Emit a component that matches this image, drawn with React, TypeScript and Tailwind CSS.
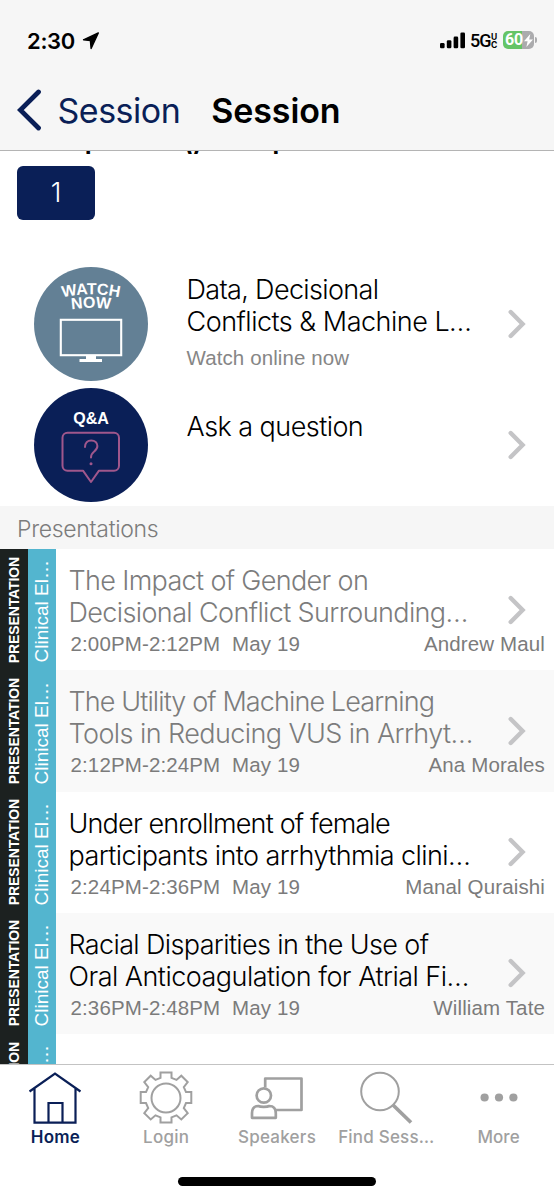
import type { ReactNode } from "react";

type Line = { text: string; cls: string };
type Talk = { lines: Line[]; time: string; speaker: string; past: boolean };

const talks: Talk[] = [
  {
    lines: [
      { text: "The Impact of Gender on", cls: "tracking-[-0.650px]" },
      { text: "Decisional Conflict Surrounding…", cls: "tracking-[-0.620px]" },
    ],
    time: "2:00PM-2:12PM  May 19",
    speaker: "Andrew Maul",
    past: true,
  },
  {
    lines: [
      { text: "The Utility of Machine Learning", cls: "tracking-[-0.890px]" },
      { text: "Tools in Reducing VUS in Arrhyt…", cls: "tracking-[-0.580px]" },
    ],
    time: "2:12PM-2:24PM  May 19",
    speaker: "Ana Morales",
    past: true,
  },
  {
    lines: [
      { text: "Under enrollment of female", cls: "tracking-[-0.820px]" },
      { text: "participants into arrhythmia clini…", cls: "tracking-[-0.580px]" },
    ],
    time: "2:24PM-2:36PM  May 19",
    speaker: "Manal Quraishi",
    past: false,
  },
  {
    lines: [
      { text: "Racial Disparities in the Use of", cls: "tracking-[-0.630px]" },
      { text: "Oral Anticoagulation for Atrial Fi…", cls: "tracking-[-0.520px]" },
    ],
    time: "2:36PM-2:48PM  May 19",
    speaker: "William Tate",
    past: false,
  },
];

function Chevron() {
  return (
    <svg width="18" height="30" viewBox="0 0 18 30" fill="none" className="shrink-0">
      <path d="M2.7 3 L14.6 15 L2.7 27" stroke="#c4c4c6" strokeWidth="4.4" strokeLinecap="round" strokeLinejoin="miter" />
    </svg>
  );
}

function StatusBar() {
  return (
    <div className="flex h-[70px] items-start pl-[27px] pr-[17px] pt-[27px]">
      <span className="text-[22px] font-semibold leading-7 tracking-[-0.300px]">2:30</span>
      <svg width="18" height="18" viewBox="0 0 18 18" className="ml-[7px] mt-[5px]">
        <path
          d="M16.300 1 1.500 7.800l6.900.8.700 7.900z"
          stroke="black"
          strokeWidth="1.400"
          strokeLinejoin="round"
        />
      </svg>
      <svg width="26" height="17" viewBox="0 0 26 17" className="ml-auto mt-[5px]">
        <rect x="0" y="11" width="4.600" height="5.300" rx="1.300" />
        <rect x="6.800" y="8.300" width="4.600" height="8" rx="1.300" />
        <rect x="13.600" y="4.600" width="4.600" height="11.700" rx="1.300" />
        <rect x="20.400" y="0.500" width="4.600" height="15.800" rx="1.300" />
      </svg>
      <span className="ml-[4px] w-[20px] whitespace-nowrap font-['Roboto',sans-serif] text-[18px] font-medium leading-7 tracking-[-1px]">5G</span>
      <span className="ml-[1px] mt-[6px] flex w-[7px] flex-col text-[8.500px] font-bold leading-[8px]">
        <span>U</span>
        <span>C</span>
      </span>
      <div className="ml-[5px] mt-[4px] flex h-[18px] w-[31px] items-center rounded-[5px] bg-linear-to-r from-[#65c466] from-62% to-[#ababad] to-62% pl-[2px] text-white">
        <span className="font-['Roboto',sans-serif] text-[16px] font-bold leading-[18px] tracking-[-0.200px]">60</span>
        <svg width="9" height="13" viewBox="0 0 9 13" fill="white" className="ml-[1px]">
          <path d="M6.300 0 0 7.300h3.600L2.400 13 9 5.400H5.200z" />
        </svg>
      </div>
      <div className="ml-[1px] mt-[10px] h-[6px] w-[2px] rounded-r-full bg-[#ababad]" />
    </div>
  );
}

function ActionRow({ icon, children }: { icon: ReactNode; children: ReactNode }) {
  return (
    <div className="flex h-[121.250px] items-center pl-[34px] pr-[28px]">
      <div className="shrink-0">{icon}</div>
      <div className="ml-[38.500px] flex h-full flex-1 flex-col whitespace-nowrap pt-[11px]">{children}</div>
      <Chevron />
    </div>
  );
}

function WatchIcon() {
  return (
    <svg width="114" height="114" viewBox="0 0 114 114" className="block">
      <circle cx="57" cy="57" r="57" fill="#638095" />
      <path id="watch-arc" d="M24 31.500 Q57 23 90 31.500" fill="none" />
      <path id="now-arc" d="M30 43.500 Q57 38.500 84 43.500" fill="none" />
      <g fill="white" fontFamily="Liberation Sans, sans-serif" fontWeight="700" textAnchor="middle">
        <text fontSize="16">
          <textPath href="#watch-arc" startOffset="50%">WATCH</textPath>
        </text>
        <text fontSize="16">
          <textPath href="#now-arc" startOffset="50%">NOW</textPath>
        </text>
      </g>
      <rect x="26.800" y="52.800" width="60.400" height="35.400" fill="none" stroke="white" strokeWidth="2.100" />
      <path d="M52 88h10v4h6v3H45.500v-3H52z" fill="white" />
    </svg>
  );
}

function QuestionIcon() {
  return (
    <svg width="114" height="114" viewBox="0 0 114 114" className="block">
      <circle cx="57" cy="57" r="57" fill="#0a1f57" />
      <text x="57" y="35.500" fill="white" fontFamily="Liberation Sans, sans-serif" fontWeight="700" fontSize="16" textAnchor="middle">
        Q&amp;A
      </text>
      <g fill="none" stroke="#a0578c" strokeWidth="2" strokeLinejoin="round" strokeLinecap="round">
        <path d="M33.500 44.700h46.500a5 5 0 0 1 5 5v28a5 5 0 0 1-5 5H65L57 94l-8-11.300H33.500a5 5 0 0 1-5-5v-28a5 5 0 0 1 5-5z" />
        <path d="M51 59c0-4 2.500-6.600 6.200-6.600s6.200 2.300 6.200 5.700c0 3-1.700 4.300-3.500 5.700-2 1.600-2.900 2.800-2.900 5.700" />
      </g>
      <circle cx="57" cy="75.800" r="1.500" fill="#a0578c" />
    </svg>
  );
}

function SideLabels() {
  return (
    <div className="flex shrink-0">
      <div className="flex w-[28px] items-center justify-center bg-[#1c2120]">
        <span className="rotate-180 whitespace-nowrap text-[14px] font-bold leading-none tracking-[-0.120px] text-white [writing-mode:vertical-rl]">
          PRESENTATION
        </span>
      </div>
      <div className="flex w-[27.500px] items-center justify-center bg-[#53b5cf]">
        <span className="mt-[4px] rotate-180 whitespace-nowrap text-[19px] leading-none text-white [writing-mode:vertical-rl]">Clinical El…</span>
      </div>
    </div>
  );
}

function TalkRow({ talk, shaded }: { talk: Talk; shaded: boolean }) {
  return (
    <div className="flex h-[121.250px] font-['Liberation_Sans',sans-serif]">
      <SideLabels />
      <div className={`relative flex-1 pl-[13px] pr-[9px] pt-[16px] ${shaded ? "bg-[#f9f9f9]" : "bg-white"}`}>
        <div className={`whitespace-nowrap font-['Inter',sans-serif] text-[27px] font-light leading-8 ${talk.past ? "text-[#7c7c7c]" : "text-black"}`}>
          {talk.lines.map((l) => (
            <div key={l.text} className={l.cls}>
              {l.text}
            </div>
          ))}
        </div>
        <div className="-mt-px flex justify-between pl-[2px] text-[20.500px] leading-8 tracking-[0.130px] text-[#7b7b7b]">
          <span className="whitespace-pre">{talk.time}</span>
          <span>{talk.speaker}</span>
        </div>
        <div className="absolute right-[28px] top-[45.500px]">
          <Chevron />
        </div>
      </div>
    </div>
  );
}

function Tab({ icon, label, cls }: { icon: ReactNode; label: string; cls: string }) {
  return (
    <div className={`flex w-[110.800px] flex-col items-center whitespace-nowrap text-[17px] leading-6 ${cls}`}>
      {icon}
      <span>{label}</span>
    </div>
  );
}

const GEAR =
  "M21.500 1.500h11v5.300l5 2.100 4.800-4.200 6.400 6.400-3.900 5 2.200 5h5.300v11h-5.300l-2.200 5 3.900 5-6.400 6.400-4.800-4.200-5 2.100v5.100h-11v-5.100l-5-2.100-4.800 4.200-6.400-6.400 3.900-5-2.200-5H1.700v-11H7l2.200-5-3.900-5 6.400-6.400 4.800 4.200 5-2.100z";

function TabBar() {
  return (
    <div className="flex h-[136px] flex-col border-t border-[#c3c3c3] bg-white">
      <div className="flex h-[84px] pt-[6px] text-[#a0a0a0]">
        <Tab
          label="Home"
          cls="font-semibold text-[#0a1f57] tracking-[0.200px]"
          icon={
            <svg width="54" height="54" viewBox="0 0 54 54" fill="none" stroke="currentColor" strokeWidth="2.200">
              <path d="M1.500 20.500 27 2.500l25.500 18M6.500 17v34.700h41V17M20.500 51.700V32h14v19.700" />
            </svg>
          }
        />
        <Tab
          label="Login"
          cls="font-medium tracking-[0.300px]"
          icon={
            <svg width="54" height="54" viewBox="0 0 54 54" fill="none" stroke="currentColor" strokeWidth="2">
              <path d={GEAR} />
              <circle cx="27" cy="27" r="14.500" />
            </svg>
          }
        />
        <Tab
          label="Speakers"
          cls="font-medium tracking-[0.250px]"
          icon={
            <svg width="54" height="54" viewBox="0 0 54 54" fill="none" stroke="currentColor" strokeWidth="2.700" strokeLinejoin="round">
              <path d="M15.200 16.500V7.500h36.300v31.500H26" />
              <circle cx="13.800" cy="24.500" r="7.200" />
              <path d="M2 46.800v-4.500c0-4.800 2.500-7.300 6.300-7.300 2 1.200 9 1.200 11 0 4 0 6.500 2.500 6.500 7.300v4.500z" />
            </svg>
          }
        />
        <Tab
          label="Find Sess…"
          cls="font-medium tracking-[0.200px] pr-[3px]"
          icon={
            <svg width="54" height="54" viewBox="0 0 54 54" fill="none" stroke="currentColor">
              <circle cx="21" cy="20.500" r="18.800" strokeWidth="2" />
              <path d="m34 34 18 17.500" strokeWidth="3.700" />
            </svg>
          }
        />
        <Tab
          label="More"
          cls="font-medium tracking-[0.100px]"
          icon={
            <svg width="54" height="54" viewBox="0 0 54 54" fill="currentColor">
              <circle cx="12.600" cy="26.500" r="4.100" />
              <circle cx="27" cy="26.500" r="4.100" />
              <circle cx="41.400" cy="26.500" r="4.100" />
            </svg>
          }
        />
      </div>
      <div className="mx-auto mt-[28px] h-[9px] w-[198px] rounded-full bg-black" />
    </div>
  );
}

export default function App() {
  return (
    <div className="flex h-[1200px] w-[554px] flex-col overflow-hidden bg-white font-['Inter',sans-serif] text-black">
      <header className="h-[151px] shrink-0 border-b border-[#b4b4b4] bg-[#f6f6f6]">
        <StatusBar />
        <div className="flex h-[80px] items-center pl-[16.500px] text-[34px]">
          <svg width="25" height="42" viewBox="0 0 25 42" fill="none">
            <path d="M21.500 3 3.300 21l18.200 18" stroke="#0a1f57" strokeWidth="4.800" strokeLinecap="round" />
          </svg>
          <span className="ml-[16px] tracking-[-0.500px] text-[#0a1f57]">Session</span>
          <span className="ml-[31px] font-semibold tracking-[-0.100px]">Session</span>
        </div>
      </header>
      <div className="flex h-[3px] shrink-0 items-end overflow-hidden pl-[84px] text-[27px] font-semibold leading-[5px]">
        <span className="w-[101px]">(</span>
        <span className="w-[85px]">y</span>
        <span>)</span>
      </div>
      <main className="min-h-0 flex-1 overflow-hidden">
        <div className="h-[109px] pl-[17px] pt-[12px]">
          <div className="flex h-[54px] w-[78px] items-center justify-center rounded-[6px] bg-[#0a1f57] text-[27px] font-light text-white">1</div>
        </div>
        <ActionRow icon={<WatchIcon />}>
          <div className="text-[27px] font-light leading-8">
            <div className="tracking-[-0.650px]">Data, Decisional</div>
            <div className="tracking-[-0.500px]">Conflicts &amp; Machine L…</div>
          </div>
          <div className="mt-[4px] font-['Liberation_Sans',sans-serif] text-[20.500px] leading-8 tracking-[0.100px] text-[#868686]">Watch online now</div>
        </ActionRow>
        <ActionRow icon={<QuestionIcon />}>
          <div className="pt-[16px] text-[27px] font-light leading-8 tracking-[-0.550px]">Ask a question</div>
        </ActionRow>
        <div className="flex h-[43.500px] items-center bg-[#f6f6f6] pl-[17px] pt-[3px] text-[23px] font-light tracking-[-0.300px] text-[#7c7c7c]">Presentations</div>
        {talks.map((t, i) => (
          <TalkRow key={t.time} talk={t} shaded={i % 2 === 1} />
        ))}
        <div className="flex h-[121.250px] font-['Liberation_Sans',sans-serif]">
          <SideLabels />
        </div>
      </main>
      <TabBar />
    </div>
  );
}
